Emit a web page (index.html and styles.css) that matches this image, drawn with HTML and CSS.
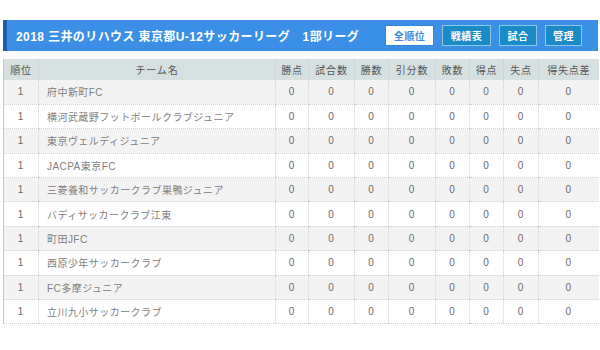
FILE: index.html
```html
<!DOCTYPE html>
<html lang="ja">
<head>
<meta charset="utf-8">
<link rel="stylesheet" href="styles.css">
</head>
<body>
<div class="page">
  <div class="bar">
    <h1 class="title">2018 三井のリハウス 東京都U-12サッカーリーグ　1部リーグ</h1>
    <div class="btns">
      <span class="btn btn-active btn-wide">全順位</span>
      <span class="btn btn-wide">戦績表</span>
      <span class="btn btn-mid">試合</span>
      <span class="btn btn-narrow">管理</span>
    </div>
  </div>
  <table class="standings">
    <colgroup>
      <col class="c-rank"><col class="c-team"><col class="c-pt"><col class="c-gp"><col class="c-w"><col class="c-d"><col class="c-l"><col class="c-gf"><col class="c-ga"><col class="c-gd">
    </colgroup>
    <thead>
      <tr><th>順位</th><th>チーム名</th><th>勝点</th><th>試合数</th><th>勝数</th><th>引分数</th><th>敗数</th><th>得点</th><th>失点</th><th>得失点差</th></tr>
    </thead>
    <tbody>
      <tr><td>1</td><td class="team">府中新町FC</td><td>0</td><td>0</td><td>0</td><td>0</td><td>0</td><td>0</td><td>0</td><td>0</td></tr>
      <tr><td>1</td><td class="team">横河武蔵野フットボールクラブジュニア</td><td>0</td><td>0</td><td>0</td><td>0</td><td>0</td><td>0</td><td>0</td><td>0</td></tr>
      <tr><td>1</td><td class="team">東京ヴェルディジュニア</td><td>0</td><td>0</td><td>0</td><td>0</td><td>0</td><td>0</td><td>0</td><td>0</td></tr>
      <tr><td>1</td><td class="team">JACPA東京FC</td><td>0</td><td>0</td><td>0</td><td>0</td><td>0</td><td>0</td><td>0</td><td>0</td></tr>
      <tr><td>1</td><td class="team">三菱養和サッカークラブ巣鴨ジュニア</td><td>0</td><td>0</td><td>0</td><td>0</td><td>0</td><td>0</td><td>0</td><td>0</td></tr>
      <tr><td>1</td><td class="team">バディサッカークラブ江東</td><td>0</td><td>0</td><td>0</td><td>0</td><td>0</td><td>0</td><td>0</td><td>0</td></tr>
      <tr><td>1</td><td class="team">町田JFC</td><td>0</td><td>0</td><td>0</td><td>0</td><td>0</td><td>0</td><td>0</td><td>0</td></tr>
      <tr><td>1</td><td class="team">西原少年サッカークラブ</td><td>0</td><td>0</td><td>0</td><td>0</td><td>0</td><td>0</td><td>0</td><td>0</td></tr>
      <tr><td>1</td><td class="team">FC多摩ジュニア</td><td>0</td><td>0</td><td>0</td><td>0</td><td>0</td><td>0</td><td>0</td><td>0</td></tr>
      <tr><td>1</td><td class="team">立川九小サッカークラブ</td><td>0</td><td>0</td><td>0</td><td>0</td><td>0</td><td>0</td><td>0</td><td>0</td></tr>
    </tbody>
  </table>
</div>
</body>
</html>
```

FILE: styles.css
```css
html, body {
  margin: 0;
  padding: 0;
  background: #fff;
}
body {
  font-family: "Liberation Sans", "Noto Sans CJK JP", sans-serif;
  color: #666;
}
.page {
  padding: 20px 2px 0 3px;
}
.bar {
  display: flex;
  align-items: center;
  justify-content: space-between;
  height: 31px;
  box-sizing: border-box;
  background: #3b8fe6;
  border-left: 4px solid #1a5fa8;
  padding: 0 16px 0 9px;
}
.title {
  margin: 0;
  font-size: 12px;
  font-weight: bold;
  color: #fff;
  letter-spacing: 0.4px;
  white-space: nowrap;
}
.btns {
  display: flex;
  gap: 8px;
}
.btn {
  display: inline-flex;
  align-items: center;
  justify-content: center;
  height: 21px;
  box-sizing: border-box;
  padding: 0;
  font-size: 10px;
  font-weight: bold;
  color: #fff;
  background: #1a8bc6;
  border: 1px solid #8cc6ea;
  letter-spacing: 0.5px;
}
.btn-wide { width: 49px; }
.btn-mid { width: 38px; }
.btn-narrow { width: 37px; }
.btn-active {
  background: #fff;
  color: #3b8fe6;
  border-color: #2f85dd;
}
.standings {
  margin-top: 8px;
  width: 595px;
  border-collapse: collapse;
  table-layout: fixed;
  font-size: 10px;
  border-left: 1px solid #c8c8c8;
}
.c-rank { width: 35px; }
.c-team { width: 237px; }
.c-pt { width: 33px; }
.c-gp { width: 46px; }
.c-w { width: 34px; }
.c-d { width: 47px; }
.c-l { width: 34px; }
.c-gf { width: 34px; }
.c-ga { width: 35px; }
.c-gd { width: 60px; }
.standings th {
  background: #d6e0e0;
  color: #555;
  font-weight: normal;
  font-size: 10px;
  letter-spacing: 0.8px;
  height: 21px;
  padding: 0;
  border-left: 1px dotted #c4cccc;
  text-align: center;
}
.standings td {
  height: 24.4px;
  box-sizing: border-box;
  padding: 0;
  text-align: center;
  color: #6a6a6a;
  border-bottom: 1px dotted #cfcfcf;
  border-left: 1px dotted #d4d4d4;
  letter-spacing: 0.7px;
}
.standings td.team {
  text-align: left;
  padding-left: 8px;
  color: #808080;
  letter-spacing: 0.45px;
}
.standings tbody tr:nth-child(odd) td {
  background: #f3f3f3;
}
.standings td:first-child, .standings th:first-child {
  border-left: 1px solid #c8c8c8;
}
```
